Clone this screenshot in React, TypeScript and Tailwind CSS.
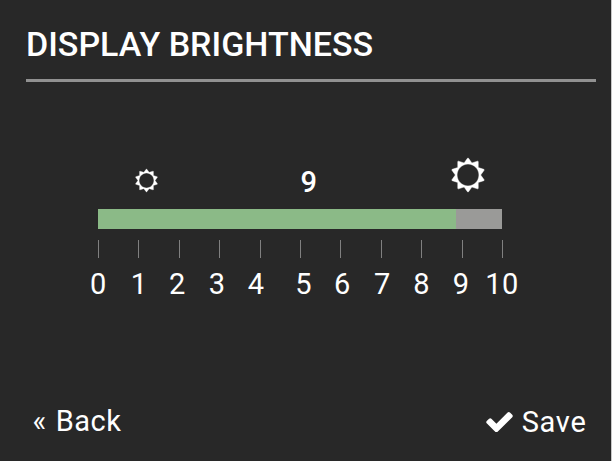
import clsx from "clsx";

type IconProps = {
  className?: string;
};

const MAX_LEVEL = 10;

const LEVELS = Array.from({ length: MAX_LEVEL + 1 }, (_, i) => i);

function SunIcon({ className }: IconProps) {
  return (
    <svg
      viewBox="0 0 1792 1792"
      fill="currentColor"
      stroke="currentColor"
      strokeWidth="24"
      className={clsx("overflow-visible", className)}
      aria-hidden="true"
    >
      <path d="M1472 896q0-117-45.5-223.5t-123-184-184-123-223.5-45.5-223.5 45.5-184 123-123 184-45.5 223.5 45.5 223.5 123 184 184 123 223.5 45.5 223.5-45.5 184-123 123-184 45.5-223.5zm276 277q-4 15-20 20l-292 96v306q0 16-13 26-15 10-29 4l-292-94-180 248q-10 13-26 13t-26-13l-180-248-292 94q-14 6-29-4-13-10-13-26v-306l-292-96q-16-5-20-20-5-17 4-29l180-248-180-248q-9-13-4-29 4-15 20-20l292-96v-306q0-16 13-26 15-10 29-4l292 94 180-248q9-12 26-12t26 12l180 248 292-94q14-6 29 4 13 10 13 26v306l292 96q16 5 20 20 5 16-4 29l-180 248 180 248q9 12 4 29z" />
    </svg>
  );
}

function CheckIcon({ className }: IconProps) {
  return (
    <svg viewBox="121 334 1550 1188" fill="currentColor" className={className} aria-hidden="true">
      <path d="M1671 566q0 40-28 68l-724 724-136 136q-28 28-68 28t-68-28l-136-136-362-362q-28-28-28-68t28-68l136-136q28-28 68-28t68 28l294 295 656-657q28-28 68-28t68 28l136 136q28 28 28 68z" />
    </svg>
  );
}

function BrightnessSlider({ value }: { value: number }) {
  return (
    <div className="ml-[98px] w-[405px]">
      <div className="flex h-[52px] items-start">
        <SunIcon className="mt-[11.5px] ml-[37px] size-[23px]" />
        <span className="mt-[8px] ml-[142.5px] w-4 text-[29px] leading-[34px] font-medium">
          {value}
        </span>
        <SunIcon className="mt-[1px] ml-[134px] size-[34px]" />
      </div>

      <div className="flex h-[20px] w-[404px] bg-[#9a9a98]">
        <div className="w-[358px] bg-[#8bba87]" />
      </div>

      <div className="mt-[11px] flex h-[18px] justify-between">
        {LEVELS.map((level) => (
          <div key={level} className="w-px bg-[#808080]" />
        ))}
      </div>

      {/* label columns follow the ticks only loosely */}
      <div className="mt-[9px] -ml-[8px] grid w-[430px] grid-cols-[40.7px_38.3px_39.7px_39px_47.6px_38.7px_40px_39.2px_39.7px_32.4px_34px] text-[29px] leading-[34px]">
        {LEVELS.map((level) => (
          <span key={level} className={clsx(level === MAX_LEVEL && "tracking-[0.5px]")}>
            {level}
          </span>
        ))}
      </div>
    </div>
  );
}

export default function App() {
  return (
    <div className="flex h-[461px] w-[612px] flex-col overflow-hidden border-r border-[#c8c8c8] bg-[#282828] font-['Roboto',sans-serif] text-white">
      <header className="mr-[15px] ml-[26px] h-[82px] border-b-[3px] border-[#919191] pt-[24px]">
        <h1 className="text-[34px] leading-[40px] font-medium whitespace-nowrap">
          DISPLAY BRIGHTNESS
        </h1>
      </header>

      <main className="pt-[75px]">
        <BrightnessSlider value={9} />
      </main>

      <footer className="mt-auto mb-[22px] flex items-start justify-between pr-[24.5px] pl-[32.4px] text-[29px] leading-[34px]">
        <button type="button" className="-mt-px flex gap-[9.2px] tracking-[0.5px]">
          <span>«</span>
          <span>Back</span>
        </button>
        <button type="button" className="flex items-start gap-[9px]">
          <CheckIcon className="mt-[6.5px] h-[20.3px] w-[27px]" />
          <span className="tracking-[0.7px]">Save</span>
        </button>
      </footer>
    </div>
  );
}
